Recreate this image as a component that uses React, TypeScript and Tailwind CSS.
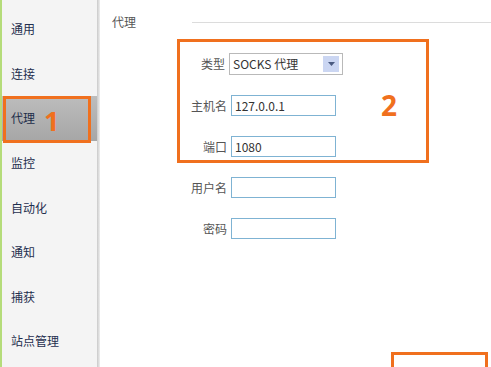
import React from "react";

const font = { fontFamily: '"Microsoft YaHei", "Noto Sans CJK SC", "Noto Sans", sans-serif' };

const items = ["通用", "连接", "代理", "监控", "自动化", "通知", "捕获", "站点管理"];

function Field({ label, value, w = "w-[105px]" }: { label: string; value?: string; w?: string }) {
  return (
    <div className="flex items-center h-[21px]">
      <div className="w-[56px] text-right pr-[4px] text-[12px] text-[#555]">{label}</div>
      <div className={`${w} h-[21px] border border-[#7fb3d3] bg-white flex items-center px-[3px] text-[12px] text-[#333]`}>{value}</div>
    </div>
  );
}

export default function App() {
  return (
    <div className="relative w-[491px] h-[367px] overflow-hidden bg-white flex" style={font}>
      <div className="w-[2px] bg-[#b5dc7a]" />
      <div className="w-[95px] bg-[#f4f4f4] flex flex-col pt-[7px]">
        {items.map((t, i) => (
          <div
            key={t}
            className={`h-[44.6px] flex items-center pl-[9px] text-[12px] ${i === 2 ? "bg-gradient-to-b from-[#bdbdbd] to-[#a6a6a6] text-[#1d2d4a]" : "text-[#1f2f4f]"}`}
          >
            {t}
          </div>
        ))}
      </div>
      <div className="w-[3px] bg-gradient-to-r from-[#c9c9c9] to-[#efefef]" />
      <div className="flex-1 flex flex-col pt-[14px]">
        <div className="flex items-center h-[16px]">
          <span className="ml-[12px] text-[12px] text-[#555]">代理</span>
          <div className="flex-1 ml-[56px] h-px bg-[#dcdcdc]" />
        </div>
        <div className="ml-[75px] mt-[23px] flex flex-col gap-[20px]">
          <div className="flex items-center h-[22px]">
            <div className="w-[54px] text-right pr-[4px] text-[12px] text-[#555]">类型</div>
            <div className="w-[114px] h-[22px] border border-[#b9b9b9] bg-white flex items-center pl-[3px] pr-[3px] text-[12px] text-[#333]">
              <span className="flex-1">SOCKS 代理</span>
              <div className="w-[16px] h-[16px] bg-[#cbd6f2] flex items-center justify-center">
                <svg width="7" height="4" viewBox="0 0 7 4"><path d="M0 0h7L3.5 4z" fill="#4a5a80" /></svg>
              </div>
            </div>
          </div>
          <Field label="主机名" value="127.0.0.1" />
          <Field label="端口" value="1080" />
          <Field label="用户名" />
          <Field label="密码" />
        </div>
      </div>

      {/* annotations */}
      <div className="absolute left-[3px] top-[96px] w-[88px] h-[47px] border-[3px] border-[#f0701e]" />
      <div className="absolute left-[44px] top-[107px] text-[27px] font-bold leading-none text-[#f0701e]" style={{ fontFamily: '"Open Sans", sans-serif' }}>1</div>
      <div className="absolute left-[177px] top-[39px] w-[252px] h-[124px] border-[3px] border-[#f0701e]" />
      <div className="absolute left-[381px] top-[91px] text-[28px] font-bold leading-none text-[#f0701e]" style={{ fontFamily: '"Open Sans", sans-serif' }}>2</div>
      <div className="absolute left-[391px] top-[352px] w-[97px] h-[30px] border-[3px] border-[#f0701e]" />
    </div>
  );
}
